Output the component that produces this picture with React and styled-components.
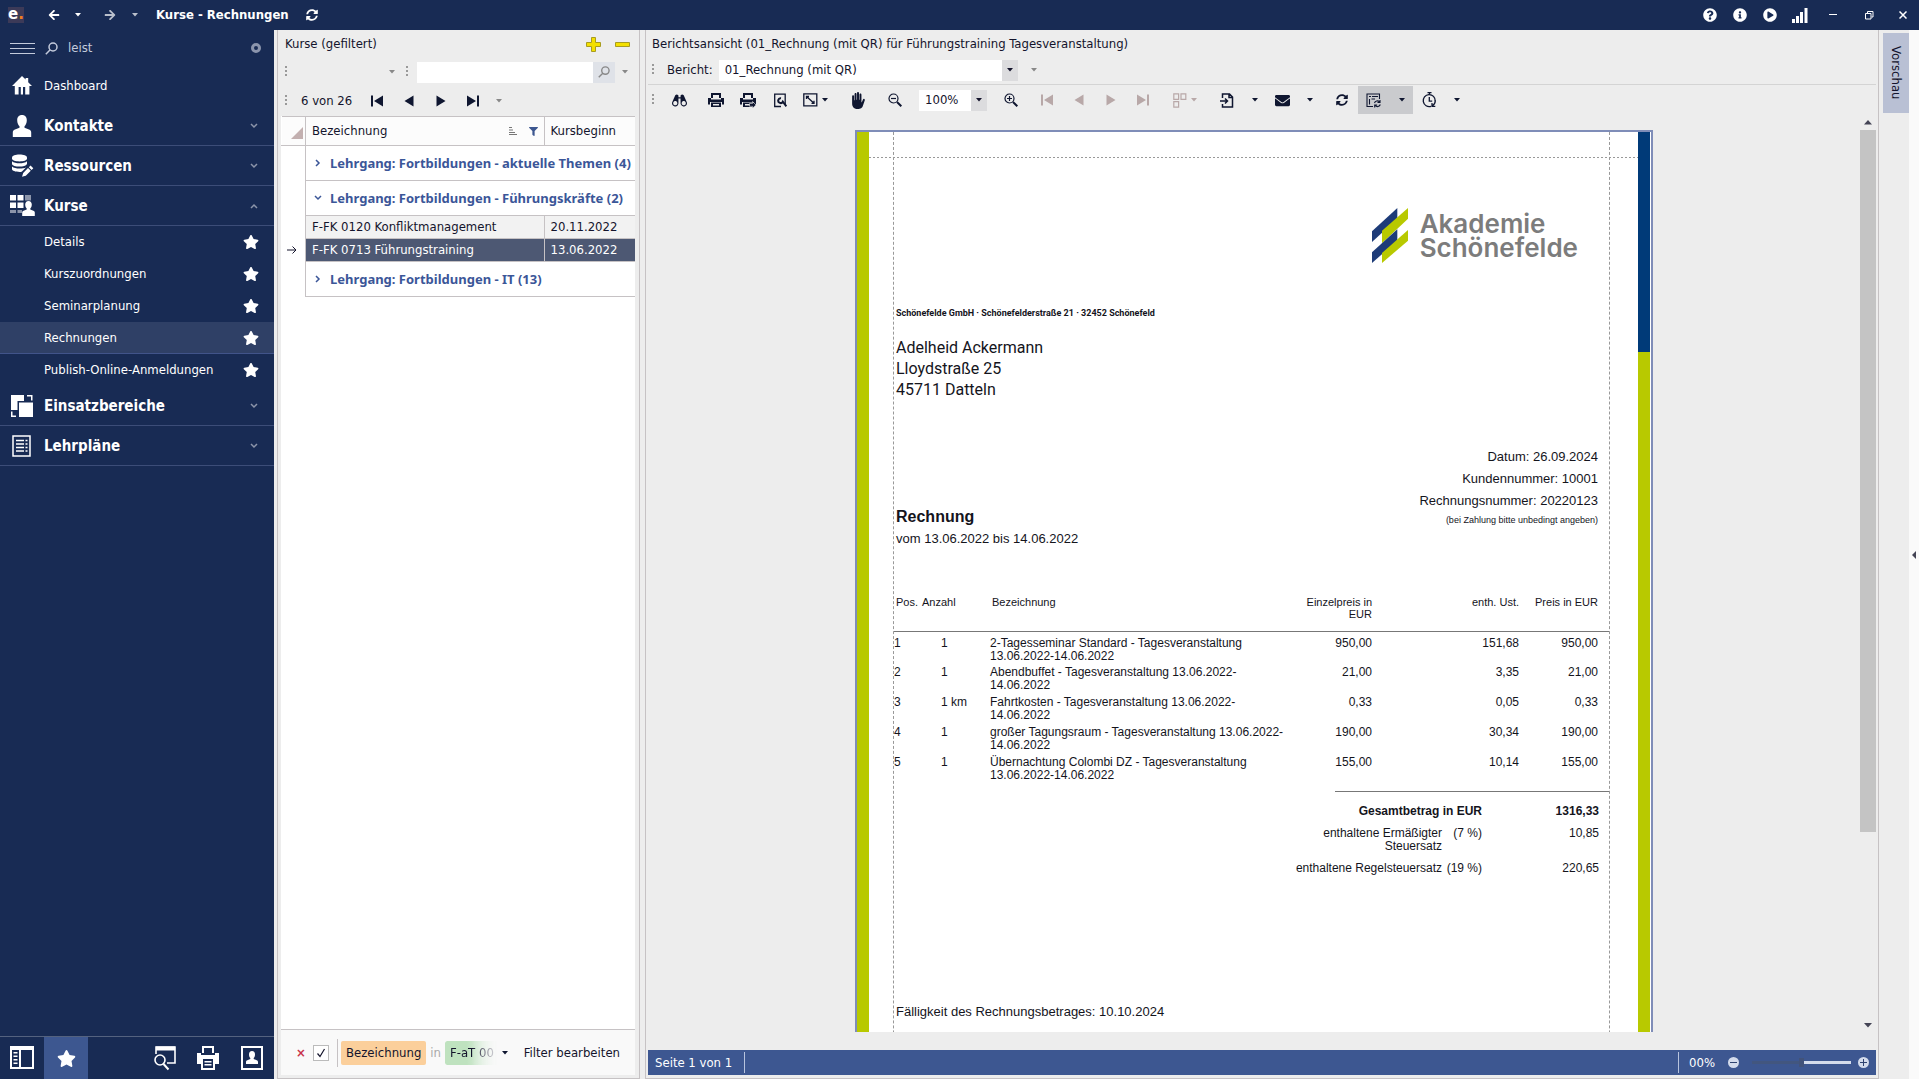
import { useState } from 'react';
import styled, { createGlobalStyle, css } from 'styled-components';
import {
  FaArrowLeft,
  FaArrowRight,
  FaSyncAlt,
  FaQuestionCircle,
  FaInfoCircle,
  FaPlayCircle,
  FaStar,
  FaEnvelope,
  FaFilter,
} from 'react-icons/fa';
import { PiBinocularsFill } from 'react-icons/pi';
import { IoHandLeftSharp } from 'react-icons/io5';

const navy = '#182b54';
const line = '#c6c2c4';
const panel = '#ededed';
const ink = '#14142c';

const GlobalStyle = createGlobalStyle`
  * { box-sizing: border-box; }
  body {
    margin: 0;
    background: ${panel};
    color: ${ink};
    font-family: "DejaVu Sans Condensed", "Noto Sans", sans-serif;
    font-size: 13px;
    line-height: 16px;
  }
  button, input, select { font: inherit; color: inherit; }
  button {
    border: 0;
    padding: 0;
    background: transparent;
  }
  svg { display: block; flex: none; }
`;

/* ---------- icons ---------- */

const Svg = ({ w = 20, h = w, box = `0 0 ${w} ${h}`, children }) => (
  <svg width={w} height={h} viewBox={box} fill="currentColor" aria-hidden="true">{children}</svg>
);

const Stroke = ({ w = 20, h = w, box = `0 0 ${w} ${h}`, sw = 1.5, children }) => (
  <svg width={w} height={h} viewBox={box} fill="none" stroke="currentColor" strokeWidth={sw} aria-hidden="true">
    {children}
  </svg>
);

const Caret = () => <Svg w={6} h={4}><path d="M0 0h6L3 3.6z" /></Svg>;
const ChevDown = () => <Stroke w={8} h={6}><path d="M1 1l3 3 3-3" /></Stroke>;
const ChevUp = () => <Stroke w={8} h={6}><path d="M1 5l3-3 3 3" /></Stroke>;
const ChevRight = () => <Stroke w={6} h={8}><path d="M1 1l3 3-3 3" /></Stroke>;

const HomeIcon = () => <Svg w={20} h={19}><path d="M10 0l3.6 3.6V2h2.6v4.2L20 10h-2.6v8.5h-4.2V11H11v7.500H8.800V11H6.600v7.500H2.800V10H0z" /></Svg>;
const PersonIcon = () => (
  <Svg w={20} h={22}>
    <path d="M10 0c3.200 0 4.800 2.200 4.800 5.200 0 2.600-1 5-2.300 6v1.600l4.500 1.600c1.600.6 2.200 1.600 2.200 3.200V22H.800v-4.400c0-1.600.6-2.600 2.200-3.200l4.500-1.600v-1.600c-1.300-1-2.300-3.400-2.300-6C5.200 2.200 6.800 0 10 0z" />
  </Svg>
);
const DatabaseIcon = () => (
  <Svg w={23} h={23}>
    <path d="M1 3.500C1 1.500 4.500.5 8.500.5S16 1.500 16 3.500v1.300c0 1.600-3.500 2.600-7.500 2.600S1 6.400 1 4.800z" />
    <path d="M1 7.200c1.500 1.400 4.500 2 7.500 2s6-.6 7.500-2V10c-1 1.800-4 2.600-7.500 2.600S1 11.600 1 10z" />
    <path d="M1 12.600c1.500 1.400 4.500 2 7.500 2 2.600 0 5-.4 6.700-1.400L11 17.500l-1 .4c-5 .2-9-.8-9-2.800z" />
    <path d="M19.500 11.500l2.800 2.800-1.700 1.700-2.800-2.800zM17 14l2.800 2.800-5 5L11 22.800l1.200-3.800z" />
  </Svg>
);
const CoursesIcon = () => (
  <Svg w={25} h={21}>
    <path d="M0 0h6v5.500H0zM7.500 0h6v5.500h-6zM0 7.500h6V13H0zM7.500 7.500h6V13h-6z" />
    <path d="M15 0h6v5.500h-6zM0 15h6v3H0zM7.500 15h4.500v3H7.500z" opacity=".5" />
    <path d="M18.500 6c2.100 0 3.300 1.500 3.300 3.600 0 1.800-.7 3.300-1.500 4v1l3 1.100c1 .4 1.500 1 1.500 2V21H12.200v-3.300c0-1 .4-1.600 1.500-2l3-1.100v-1c-.8-.7-1.500-2.200-1.500-4C15.200 7.500 16.400 6 18.500 6z" />
  </Svg>
);
const AreasIcon = () => (
  <Svg w={22} h={22}>
    <path d="M0 0h13v6H6.500v9H0z" />
    <path d="M8 7.500h14V22H8z" />
    <path d="M16 0h5.500v5.500H20v-4h-4zM0 16.500h1.500v4H5V22H0z" />
  </Svg>
);
const PlansIcon = () => (
  <Stroke w={20} h={22}>
    <path d="M1 1h17v20H1z" sw={2} />
    <path d="M4 5.500h8M4 9h8M4 12.500h8M4 16h8M13.500 5.500h2M13.500 9h2M13.500 12.500h2M13.500 16h2" />
  </Stroke>
);
const SearchIcon = ({ w = 13 }) => (
  <Stroke w={w} box="0 0 13 13"><circle cx="8" cy="5" r="4" /><path d="M5.200 7.800L.8 12.200" /></Stroke>
);
const ZoomIcon = ({ plus }) => (
  <Stroke w={14} sw={1.2}>
    <circle cx="5.500" cy="5.500" r="4.500" />
    <path d="M9 9l4.300 4.300" strokeWidth="2" />
    <path d={plus ? 'M3 5.500h5M5.500 3v5' : 'M3 5.500h5'} />
  </Stroke>
);
const PrinterIcon = ({ mini }) => (
  <Svg w={16} h={15}>
    <path fillRule="evenodd" d="M3 0h10v5h-2V2H5v3H3zM0 5h3v1.500h10V5h3v6.500h-2V9H2v2.500H0zM3 9.500h10V14H3zM5 11v1.500h6V11z" />
    {mini && <path d="M9.500 10.500h3V8.500l3.500 3.400-3.500 3.400v-2h-3z" stroke={panel} strokeWidth=".6" />}
  </Svg>
);
const PageSetupIcon = () => (
  <Stroke w={14} h={15} sw={1.3}>
    <path d="M8 13.500H1.700V1.200h10.500v10" />
    <path d="M8 5.300a2.400 2.400 0 1 0 1.800 3.400l3.600 4.600" strokeWidth="2" />
  </Stroke>
);
const FitIcon = () => (
  <Stroke w={15} h={14} sw={1.3}>
    <path d="M.8.800h13v12H.8z" /><path d="M3.500 6V3.500H6M3.500 3.500l7.500 6.800M11 7.800v2.500H8.500" />
  </Stroke>
);
const PagesIcon = () => (
  <Stroke w={14} h={15} sw={1.200}><path d="M.8.800h4.800v5.500H.8zM8 .8h4.800v5.500H8zM.8 8.600h4.800v5.500H.8z" /></Stroke>
);
const ExportIcon = () => (
  <Stroke w={14} h={15}><path d="M2.500 5V1h7l3 3v10h-10v-3M9 1v3.500h3.500" /><path d="M0 8h7.500M5 5.500L7.500 8 5 10.500" /></Stroke>
);
const LayoutIcon = () => (
  <Stroke w={16} h={15} sw={1.1}>
    <path d="M7 13.500H1V1h12.500v5" /><path d="M3 3.500h2M6 3.500h6M3.500 6v5.500M5.500 6H9" />
    <path d="M8.500 10a3 3 0 0 1 5-1.200M14 7v2.500h-2.500M14.300 11.500a3 3 0 0 1-5 1.200M8.700 14.500V12h2.500" />
  </Stroke>
);
const ClockIcon = () => (
  <Stroke w={15} h={16} sw={1.3}>
    <path d="M9 14.300a6 6 0 1 1 4.200-5.300" /><path d="M7.500 0v2.500M7.300 5v4.200h2.900M5.500.7h4" />
    <path d="M13.300 8.500c0 2.600-1 4-2.600 5M10 11v3.300h3.300" />
  </Stroke>
);
const FirstIcon = () => <Svg w={12} h={12}><path d="M0 .5h2v11H0zM12 .5v11L3 6z" /></Svg>;
const PrevIcon = () => <Svg w={10} h={12}><path d="M9.500.5v11L.5 6z" /></Svg>;
const NextIcon = () => <Svg w={10} h={12}><path d="M.5.500v11L9.500 6z" /></Svg>;
const LastIcon = () => <Svg w={12} h={12}><path d="M10 .5h2v11h-2zM0 .5v11L9 6z" /></Svg>;
const SignalIcon = () => <Svg w={16} h={15}><path d="M0 11h3v4H0zM4 8h3v7H4zM8 4h3v11H8zM12.500 0h3v15h-3z" /></Svg>;
const LogoMark = () => (
  <svg width="36" height="55" viewBox="0 0 108 165" aria-hidden="true">
    <path fill="#1d3b78" d="M76 0v32L0 102V70z" />
    <path fill="#b8c900" d="M108 0v32L30 106V68z" />
    <path fill="#1d3b78" d="M76 64v34L0 165v-32z" />
    <path fill="#b8c900" d="M108 66v32l-78 67v-30z" />
  </svg>
);

/* ---------- shell ---------- */

const Shell = styled.div`
  display: flex;
  flex-direction: column;
  height: 100vh;
  overflow: hidden;
`;

const TitleBar = styled.header`
  display: flex;
  align-items: center;
  flex: none;
  height: 30px;
  padding-left: 8px;
  background: ${navy};
  color: #fff;
`;

const AppBadge = styled.span`
  width: 16px;
  height: 16px;
  margin-right: 14px;
  background: #3c3a58;
  font: 700 15px/14px "DejaVu Sans", sans-serif;
  text-align: center;
  i { color: #f08020; font-style: normal; }
`;

const TitleButton = styled.button`
  display: grid;
  place-items: center;
  width: ${({ $w }) => $w || 30}px;
  height: 30px;
  opacity: ${({ $dim }) => ($dim ? 0.7 : 1)};
`;

const WindowTitle = styled.h1`
  margin: 0 8px;
  font-size: 13px;
  line-height: 16px;
`;

const Spacer = styled.div`
  flex: 1;
`;

const Main = styled.div`
  display: flex;
  flex: 1;
  min-height: 0;
`;

/* ---------- sidebar ---------- */

const Sidebar = styled.nav`
  display: flex;
  flex-direction: column;
  flex: none;
  width: 274px;
  background: ${navy};
  color: #fff;
`;

const SideSearch = styled.label`
  display: flex;
  align-items: center;
  height: 36px;
  padding: 0 13px 0 10px;
  gap: 10px;
  color: #c4cbdc;
  input {
    flex: 1;
    min-width: 0;
    padding: 0;
    border: 0;
    outline: 0;
    background: transparent;
  }
`;

const Clear = styled.button`
  width: 10px;
  height: 10px;
  border: 3px solid #8b95ad;
  border-radius: 50%;
`;

const navRow = css`
  display: flex;
  align-items: center;
  width: 100%;
  text-align: left;
  text-decoration: none;
  color: #fff;
`;

const NavGroup = styled.button`
  ${navRow}
  height: 40px;
  padding: 0 16px 0 9px;
  border-bottom: 1px solid ${({ $plain }) => ($plain ? 'transparent' : '#3c4d78')};
  font-size: ${({ $plain }) => ($plain ? 13 : 15)}px;
  font-weight: ${({ $plain }) => ($plain ? 400 : 700)};
  > span:first-child {
    display: grid;
    place-items: center;
    width: 26px;
    margin-right: 9px;
  }
  > svg { margin-left: auto; opacity: 0.5; }
`;

const NavLink = styled.a`
  ${navRow}
  justify-content: space-between;
  height: 32px;
  padding: 0 15px 0 44px;
  border-bottom: 1px solid ${({ $active }) => ($active ? '#41548a' : 'transparent')};
  background: ${({ $active }) => ($active ? '#2f4066' : 'transparent')};
`;

const SideFooter = styled.div`
  display: flex;
  margin-top: auto;
  height: 43px;
  border-top: 1px solid #54627f;
`;

const FooterButton = styled.button`
  display: grid;
  place-items: center;
  width: 44px;
  background: ${({ $active }) => ($active ? '#3d5790' : 'transparent')};
`;

/* ---------- course list ---------- */

const ListPanel = styled.section`
  display: flex;
  flex-direction: column;
  flex: none;
  width: 363px;
  margin: 0 5px 0 3px;
  padding: 0 4px 3px 3px;
  border: 1px solid ${line};
  border-width: 0 1px 1px;
`;

const PanelTitle = styled.div`
  display: flex;
  align-items: center;
  height: 28px;
  padding-left: 4px;
  h2 {
    margin: 0 auto 0 0;
    font-size: 13px;
    font-weight: 400;
  }
`;

const YellowButton = styled.button`
  display: grid;
  place-items: center;
  width: 32px;
  height: 20px;
  color: #f4e000;
  &:last-child { width: 26px; }
`;

const Bar = styled.div`
  display: flex;
  align-items: center;
  height: ${({ $h }) => $h || 28}px;
`;

const Grip = styled.span`
  width: 2px;
  height: 12px;
  margin: 0 ${({ $end }) => $end || 8}px 0 4px;
  background: repeating-linear-gradient(#999 0 2px, transparent 2px 4px);
`;

const ToolButton = styled.button`
  display: grid;
  grid-auto-flow: column;
  place-content: center;
  align-items: center;
  gap: 4px;
  width: ${({ $w }) => $w || 32}px;
  height: 28px;
  background: ${({ $on }) => ($on ? '#cacbce' : 'transparent')};
  color: ${({ disabled, $soft }) => (disabled ? '#b8a8a8' : $soft ? '#888' : '#0f1630')};
`;

const Gap = styled.span`
  flex: none;
  width: ${({ $w }) => $w || 8}px;
`;

const SearchField = styled.label`
  display: flex;
  width: 198px;
  height: 21px;
  background: #fff;
  input {
    flex: 1;
    min-width: 0;
    border: 0;
    outline: 0;
    background: transparent;
  }
  span {
    display: grid;
    place-items: center;
    width: 22px;
    background: #dfe2e8;
    color: #888;
  }
`;

const GridArea = styled.div`
  flex: 1;
  min-height: 0;
  background: #fff;
`;

const Grid = styled.table`
  width: 100%;
  border-collapse: collapse;
  table-layout: fixed;
  th, td {
    padding: 0 6px;
    border: 1px solid ${line};
    font-weight: 400;
    text-align: left;
    white-space: nowrap;
  }
  th { height: 29px; background: #fcfcfc; }
  td:first-child { border-color: transparent ${line} transparent transparent; padding: 0 4px; }
  th:first-child { border-left: 0; vertical-align: bottom; padding: 0 2px 6px; }
  th:last-child, td:last-child { border-right: 0; }
  th:first-child svg { margin-left: auto; color: #c3b0b0; }
`;

const HeadCell = styled.div`
  display: flex;
  align-items: center;
  gap: 12px;
  svg:first-of-type { margin-left: auto; color: #777; }
  svg:last-of-type { color: #3d5790; }
`;

const GroupButton = styled.button`
  display: flex;
  align-items: center;
  gap: 8px;
  height: 34px;
  padding-left: 2px;
  color: #3b5698;
  font-family: "Noto Sans", sans-serif;
  font-size: 13px;
  font-weight: 700;
  > span { display: grid; place-items: center; width: 8px; }
`;

const CourseRow = styled.tr`
  height: 23px;
  td:not(:first-child) {
    background: ${({ $active }) => ($active ? '#4d5873' : '#f2f2f2')};
    color: ${({ $active }) => ($active ? '#fff' : ink)};
  }
`;

const FilterBar = styled.div`
  display: flex;
  align-items: center;
  height: 46px;
  padding: 0 15px;
  border-top: 1px solid ${line};
  background: #f9f9f9;
  white-space: nowrap;
`;

const Remove = styled.button`
  width: 8px;
  margin-right: 9px;
  color: #c8324a;
  font-weight: 700;
`;

const Check = styled.label`
  display: grid;
  margin-right: 8px;
  > * { grid-area: 1 / 1; place-self: center; }
  input {
    appearance: none;
    width: 16px;
    height: 16px;
    margin: 0;
    border: 1px solid #bbb;
    background: #fff;
  }
  svg { visibility: hidden; pointer-events: none; }
  input:checked + svg { visibility: visible; }
`;

const FilterBox = styled.div`
  display: flex;
  align-items: center;
  height: 28px;
  padding-left: 3px;
  border-left: 1px solid ${line};
`;

const Chip = styled.span`
  padding: 4px 5px;
  border-radius: 2px;
  background: #fbcf9b;
`;

const FadeChip = styled(Chip)`
  background: linear-gradient(90deg, #bfe2bf 40%, #f9f9f9);
  -webkit-mask-image: linear-gradient(90deg, #000 50%, transparent);
`;

const Muted = styled.span`
  margin: 0 4px;
  color: #aaa;
`;

/* ---------- report ---------- */

const Report = styled.section`
  display: flex;
  flex-direction: column;
  flex: 1;
  min-width: 0;
  padding: 0 2px 3px;
  border: 1px solid ${line};
  border-width: 0 1px 1px;
`;

const ReportTitle = styled.h2`
  margin: 0;
  padding: 5px 4px 0;
  height: 26px;
  font-size: 13px;
  line-height: 18px;
  font-weight: 400;
`;

const Picker = styled.span`
  display: flex;
  align-items: center;
  width: ${({ $w }) => $w}px;
  height: 21px;
  background: linear-gradient(90deg, transparent calc(100% - 16px), #dcdcde 0), #fff;
  select {
    appearance: none;
    flex: 1;
    min-width: 0;
    height: 21px;
    padding: 0 6px;
    border: 0;
    background: transparent;
  }
  svg { margin-right: 5px; pointer-events: none; }
`;

const Viewer = styled.div`
  display: flex;
  flex: 1;
  min-height: 0;
`;

const Canvas = styled.div`
  display: flex;
  justify-content: center;
  flex: 1;
  min-width: 0;
  overflow: hidden;
  padding-top: 15px;
  margin-bottom: 18px;
`;

const ScrollBar = styled.div`
  display: flex;
  flex-direction: column;
  justify-content: space-between;
  align-items: center;
  width: 16px;
  padding-bottom: 22px;
  color: #445;
`;

const Thumb = styled.div`
  flex: 1;
  width: 16px;
  margin: 5px 0 191px;
  background: #c4c4c4;
`;

const StatusBar = styled.footer`
  display: flex;
  align-items: center;
  justify-content: space-between;
  height: 25px;
  padding: 0 7px;
  background: #3d5791;
  color: #fff;
  > span {
    padding-right: 12px;
    border-right: 1px solid #b8c4de;
    line-height: 21px;
  }
`;

const ZoomControl = styled.div`
  display: flex;
  align-items: center;
  padding-left: 10px;
  border-left: 1px solid #b8c4de;
  line-height: 21px;
  span { margin-right: 13px; }
  input {
    appearance: none;
    width: 99px;
    height: 3px;
    margin: 0 7px 0 13px;
    background: linear-gradient(90deg, #42567f 52%, #d4dcec 0);
  }
  input::-webkit-slider-thumb {
    appearance: none;
    width: 5px;
    height: 9px;
    background: #42537a;
  }
`;

const RoundButton = styled.button`
  display: grid;
  place-items: center;
  width: 11px;
  height: 11px;
  border-radius: 50%;
  background: #d4dcec;
  color: #2f4370;
`;

const TabStrip = styled.aside`
  display: flex;
  flex: none;
  width: 40px;
  padding-left: 4px;
`;

const SideTab = styled.button`
  width: 26px;
  height: 80px;
  margin-top: 3px;
  background: #b9c0d4;
  writing-mode: vertical-rl;
`;

const Rail = styled.div`
  display: grid;
  place-items: center;
  flex: 1;
  background: #fafafa;
  color: #445;
`;

/* ---------- invoice page ---------- */

const Page = styled.article`
  display: flex;
  flex: none;
  width: 798px;
  height: 1130px;
  border: 2px solid #7f8db8;
  background: #fff;
  color: #14141c;
  font-family: "Liberation Sans", Arial, sans-serif;
`;

const Stripe = styled.div`
  width: 12px;
  margin-right: ${({ $right }) => ($right ? 1 : 0)}px;
  background: ${({ $right }) => ($right ? 'linear-gradient(#003a78 220px, #b8c900 0)' : '#b8c900')};
`;

const Sheet = styled.div`
  flex: 1;
  padding: 0 28px 0 24px;
  background: repeating-linear-gradient(90deg, #999 0 2px, transparent 2px 4px) 0 25px / 100% 1px no-repeat;
`;

const Body = styled.div`
  height: 100%;
  padding: 76px 0 0 2px;
  border: 1px dashed #999;
  border-width: 0 1px;
`;

const Brand = styled.div`
  display: flex;
  align-items: center;
  justify-content: flex-end;
  gap: 12px;
  padding-right: 31px;
  color: #7c7c7c;
  font: 600 26px/24px Inter, sans-serif;
`;

const Sender = styled.p`
  margin: 44px 0 0;
  font: 700 9px/12px Roboto, sans-serif;
`;

const Address = styled.address`
  margin-top: 18px;
  font: 400 16px/21px Roboto, sans-serif;
`;

const Meta = styled.div`
  display: flex;
  justify-content: space-between;
  align-items: flex-end;
  margin-top: 46px;
  padding-right: 11px;
  font-size: 13px;
  line-height: 22px;
  h3 { margin: 0; font-size: 16px; line-height: 22px; }
  p { margin: 0; }
`;

const Refs = styled.div`
  padding-bottom: 22px;
  text-align: right;
  small { display: block; font-size: 9px; line-height: 16px; }
`;

const Items = styled.table`
  width: 715px;
  margin: 46px 0 0 -2px;
  border-collapse: collapse;
  table-layout: fixed;
  font-size: 12px;
  line-height: 13px;
  th, td {
    padding: 0;
    font-weight: 400;
    text-align: left;
    vertical-align: top;
  }
  th {
    height: 35px;
    padding-left: 2px;
    border-bottom: 1px solid #777;
    font-size: 11px;
    line-height: 12px;
  }
  td { height: 30px; }
  tbody tr:first-child td { padding-top: 5px; height: 35px; }
  th:nth-child(n + 4), td:nth-child(n + 4) { text-align: right; }
  th:last-child, td:last-child { padding-right: 11px; }
`;

const Count = styled.td`
  && { padding-left: 21px; }
`;

const TotalRows = styled.div`
  display: grid;
  grid-template-columns: 1fr 40px 117px;
  margin: 0 10px 0 auto;
  width: 330px;
  row-gap: 9px;
  font-size: 12px;
  line-height: 13px;
  text-align: right;
  strong:first-child { grid-column: span 2; }
`;

const TotalRule = styled.hr`
  width: 274px;
  height: 1px;
  margin: 5px 0 13px auto;
  border: 0;
  background: #777;
`;

const Due = styled.p`
  margin: 129px 0 0;
  font-size: 13px;
  line-height: 16px;
`;

const positions = [
  ['1', '1', '2-Tagesseminar Standard - Tagesveranstaltung', '13.06.2022-14.06.2022', '950,00', '151,68', '950,00'],
  ['2', '1', 'Abendbuffet - Tagesveranstaltung 13.06.2022-', '14.06.2022', '21,00', '3,35', '21,00'],
  ['3', '1 km', 'Fahrtkosten - Tagesveranstaltung 13.06.2022-', '14.06.2022', '0,33', '0,05', '0,33'],
  ['4', '1', 'großer Tagungsraum - Tagesveranstaltung 13.06.2022-', '14.06.2022', '190,00', '30,34', '190,00'],
  ['5', '1', 'Übernachtung Colombi DZ - Tagesveranstaltung', '13.06.2022-14.06.2022', '155,00', '10,14', '155,00'],
];

const links = ['Details', 'Kurszuordnungen', 'Seminarplanung', 'Rechnungen', 'Publish-Online-Anmeldungen'];

function Group({ icon, label, open }) {
  return (
    <NavGroup type="button" aria-expanded={!!open}>
      <span>{icon}</span>
      {label}
      {open ? <ChevUp /> : <ChevDown />}
    </NavGroup>
  );
}

function Side() {
  const [term, setTerm] = useState('leist');
  return (
    <Sidebar>
      <SideSearch>
        <Stroke w={25} h={12} sw={1}><path d="M0 1.500h25M0 6.500h25M0 11.500h25" /></Stroke>
        <SearchIcon />
        <input aria-label="Suche" value={term} onChange={(e) => setTerm(e.target.value)} />
        <Clear type="button" aria-label="Leeren" onClick={() => setTerm('')} />
      </SideSearch>
      <NavGroup type="button" $plain><span><HomeIcon /></span>Dashboard</NavGroup>
      <Group icon={<PersonIcon />} label="Kontakte" />
      <Group icon={<DatabaseIcon />} label="Ressourcen" />
      <Group icon={<CoursesIcon />} label="Kurse" open />
      {links.map((l) => (
        <NavLink key={l} href="#" $active={l === 'Rechnungen'}>{l}<FaStar size={16} /></NavLink>
      ))}
      <Group icon={<AreasIcon />} label="Einsatzbereiche" />
      <Group icon={<PlansIcon />} label="Lehrpläne" />
      <SideFooter>
        <FooterButton type="button" aria-label="Navigation">
          <Svg w={24} h={26} box="0 0 24 26"><path fillRule="evenodd" d="M0 1h24v23H0zM2 5v17h7V5zM11 5v17h11V5z" /><path d="M3.500 7h4v1.500h-4zM3.500 10.500h4V12h-4zM3.500 14h4v1.500h-4zM3.500 17.500h4V19h-4z" /></Svg>
        </FooterButton>
        <FooterButton type="button" aria-label="Favoriten" $active><FaStar size={19} /></FooterButton>
        <Spacer />
        <FooterButton type="button" aria-label="Suchen">
          <Stroke w={24} h={26} sw={1.600}>
            <path d="M4 9V2h19v16h-8" /><path d="M4 3.500h19" strokeWidth="4" />
            <circle cx="8" cy="15" r="5" /><path d="M11.500 19l5 5.500" strokeWidth="2" />
          </Stroke>
        </FooterButton>
        <FooterButton type="button" aria-label="Drucken">
          <Svg w={22} h={24}><path fillRule="evenodd" d="M5 0h12v7h-2V2H7v5H5zM0 7h4v2h14V7h4v11h-4v6H4v-6H0zM6 13v9h10v-9zM7.500 15h7v1.500h-7zM7.500 18h7v1.500h-7z" /></Svg>
        </FooterButton>
        <FooterButton type="button" aria-label="Benutzer">
          <Svg w={22} h={26}><path fillRule="evenodd" d="M0 1h22v24H0zM2 3v20h18V3z" /><path d="M11 6c2 0 3 1.500 3 3.400 0 1.600-.6 3-1.300 3.600v1l3 1.200c.9.400 1.300 1 1.300 1.800v2H5v-2c0-.8.400-1.400 1.300-1.800l3-1.200v-1C8.600 12.400 8 11 8 9.400 8 7.500 9 6 11 6z" /></Svg>
        </FooterButton>
      </SideFooter>
    </Sidebar>
  );
}

function CourseGroup({ label, open }) {
  return (
    <tr>
      <td />
      <td colSpan={2}>
        <GroupButton type="button"><span>{open ? <ChevDown /> : <ChevRight />}</span>{label}</GroupButton>
      </td>
    </tr>
  );
}

function Courses() {
  return (
    <ListPanel>
      <PanelTitle>
        <h2>Kurse (gefiltert)</h2>
        <YellowButton type="button" aria-label="Hinzufügen">
          <Svg w={15}><path stroke="#a89c20" d="M5.500.5h4v5h5v4h-5v5h-4v-5h-5v-4h5z" /></Svg>
        </YellowButton>
        <YellowButton type="button" aria-label="Entfernen">
          <Svg w={15} h={5}><path stroke="#a89c20" d="M.5.500h14v4H.5z" /></Svg>
        </YellowButton>
      </PanelTitle>
      <Bar>
        <Grip /><Gap $w={87} />
        <ToolButton type="button" aria-label="Optionen" $w={20} $soft><Caret /></ToolButton>
        <Grip $end={9} />
        <SearchField><input aria-label="Kurse suchen" /><span><SearchIcon w={12} /></span></SearchField>
        <ToolButton type="button" aria-label="Suchoptionen" $w={20} $soft><Caret /></ToolButton>
      </Bar>
      <Bar $h={30}>
        <Grip $end={14} />6 von 26<Gap $w={9} />
        <ToolButton type="button" aria-label="Erster"><FirstIcon /></ToolButton>
        <ToolButton type="button" aria-label="Zurück"><PrevIcon /></ToolButton>
        <ToolButton type="button" aria-label="Weiter"><NextIcon /></ToolButton>
        <ToolButton type="button" aria-label="Letzter"><LastIcon /></ToolButton>
        <ToolButton type="button" aria-label="Mehr" $w={20} $soft><Caret /></ToolButton>
      </Bar>
      <GridArea>
        <Grid>
          <colgroup><col width="24" /><col /><col width="91" /></colgroup>
          <thead>
            <tr>
              <th><Svg w={12}><path d="M12 0v12H0z" /></Svg></th>
              <th>
                <HeadCell>
                  Bezeichnung
                  <Stroke w={9} h={8} sw={1}><path d="M1 .5h3M1 3h4M1 5.500h6M1 7.500h8" /></Stroke>
                  <FaFilter size={9} />
                </HeadCell>
              </th>
              <th>Kursbeginn</th>
            </tr>
          </thead>
          <tbody>
            <CourseGroup label="Lehrgang: Fortbildungen - aktuelle Themen (4)" />
            <CourseGroup label="Lehrgang: Fortbildungen - Führungskräfte (2)" open />
            <CourseRow><td /><td>F-FK 0120 Konfliktmanagement</td><td>20.11.2022</td></CourseRow>
            <CourseRow $active>
              <td><Stroke w={11} h={8} sw={1}><path d="M1 4h9M6.500.5L10 4 6.500 7.500" /></Stroke></td>
              <td>F-FK 0713 Führungstraining</td>
              <td>13.06.2022</td>
            </CourseRow>
            <CourseGroup label="Lehrgang: Fortbildungen - IT (13)" />
          </tbody>
        </Grid>
      </GridArea>
      <FilterBar>
        <Remove type="button" aria-label="Filter entfernen">×</Remove>
        <Check>
          <input type="checkbox" defaultChecked aria-label="Filter aktiv" />
          <Stroke w={10} h={10} sw={1.2}><path d="M1.500 5.500L4 8.500 8.500 1" /></Stroke>
        </Check>
        <FilterBox>
          <Chip>Bezeichnung</Chip><Muted>in</Muted><FadeChip>F-aT 00</FadeChip>
        </FilterBox>
        <ToolButton type="button" aria-label="Filterliste" $w={16}><Caret /></ToolButton>
        <Gap $w={12} />
        <button type="button">Filter bearbeiten</button>
      </FilterBar>
    </ListPanel>
  );
}

function Invoice() {
  return (
    <Page>
      <Stripe />
      <Sheet>
        <Body>
          <Brand><LogoMark /><div>Akademie<br />Schönefelde</div></Brand>
          <Sender>Schönefelde GmbH · Schönefelderstraße 21 · 32452 Schönefeld</Sender>
          <Address>Adelheid Ackermann<br />Lloydstraße 25<br />45711 Datteln</Address>
          <Meta>
            <div>
              <h3>Rechnung</h3>
              <p>vom 13.06.2022 bis 14.06.2022</p>
            </div>
            <Refs>
              <p>Datum: 26.09.2024</p>
              <p>Kundennummer: 10001</p>
              <p>Rechnungsnummer: 20220123</p>
              <small>(bei Zahlung bitte unbedingt angeben)</small>
            </Refs>
          </Meta>
          <Items>
            <colgroup>
              <col width="26" /><col width="70" /><col width="310" /><col width="72" /><col width="147" /><col />
            </colgroup>
            <thead>
              <tr>
                <th>Pos.</th><th>Anzahl</th><th>Bezeichnung</th><th>Einzelpreis in EUR</th><th>enth. Ust.</th><th>Preis in EUR</th>
              </tr>
            </thead>
            <tbody>
              {positions.map(([pos, count, name, date, single, tax, price]) => (
                <tr key={pos}>
                  <td>{pos}</td><Count>{count}</Count><td>{name}<br />{date}</td>
                  <td>{single}</td><td>{tax}</td><td>{price}</td>
                </tr>
              ))}
            </tbody>
          </Items>
          <TotalRule />
          <TotalRows>
            <strong>Gesamtbetrag in EUR</strong><strong>1316,33</strong>
            <span>enthaltene Ermäßigter<br />Steuersatz</span><span>(7 %)</span><span>10,85</span>
            <span>enthaltene Regelsteuersatz</span><span>(19 %)</span><span>220,65</span>
          </TotalRows>
          <Due>Fälligkeit des Rechnungsbetrages: 10.10.2024</Due>
        </Body>
      </Sheet>
      <Stripe $right />
    </Page>
  );
}

const ReportBar = styled(Bar)`
  border-top: ${({ $rule }) => ($rule ? '1px solid #d4d4d4' : 0)};
`;

function ReportView() {
  return (
    <Report>
      <ReportTitle>Berichtsansicht (01_Rechnung (mit QR) für Führungstraining Tagesveranstaltung)</ReportTitle>
      <ReportBar $h={28}>
        <Grip $end={13} />
        <label htmlFor="bericht">Bericht:</label><Gap $w={6} />
        <Picker $w={299}>
          <select id="bericht"><option>01_Rechnung (mit QR)</option></select>
          <Caret />
        </Picker>
        <ToolButton type="button" aria-label="Mehr" $soft><Caret /></ToolButton>
      </ReportBar>
      <ReportBar $h={31} $rule>
        <Grip $end={9} />
        <ToolButton type="button" aria-label="Suchen"><PiBinocularsFill size={17} /></ToolButton><Gap $w={5} />
        <ToolButton type="button" aria-label="Drucken"><PrinterIcon /></ToolButton>
        <ToolButton type="button" aria-label="Schnelldruck"><PrinterIcon mini /></ToolButton>
        <ToolButton type="button" aria-label="Seite einrichten"><PageSetupIcon /></ToolButton>
        <ToolButton type="button" aria-label="Skalieren" $w={38}><FitIcon /><Caret /></ToolButton><Gap />
        <ToolButton type="button" aria-label="Hand"><IoHandLeftSharp size={17} /></ToolButton><Gap $w={5} />
        <ToolButton type="button" aria-label="Verkleinern"><ZoomIcon /></ToolButton><Gap />
        <Picker $w={68}>
          <select aria-label="Zoom"><option>100%</option></select>
          <Caret />
        </Picker>
        <Gap />
        <ToolButton type="button" aria-label="Vergrößern"><ZoomIcon plus /></ToolButton><Gap $w={4} />
        <ToolButton type="button" aria-label="Erste Seite" disabled><FirstIcon /></ToolButton>
        <ToolButton type="button" aria-label="Vorige Seite" disabled><PrevIcon /></ToolButton>
        <ToolButton type="button" aria-label="Nächste Seite" disabled><NextIcon /></ToolButton>
        <ToolButton type="button" aria-label="Letzte Seite" disabled><LastIcon /></ToolButton><Gap />
        <ToolButton type="button" aria-label="Mehrere Seiten" $w={36} disabled><PagesIcon /><Caret /></ToolButton><Gap />
        <ToolButton type="button" aria-label="Export"><ExportIcon /></ToolButton>
        <ToolButton type="button" aria-label="Exportformat" $w={23}><Caret /></ToolButton>
        <ToolButton type="button" aria-label="Senden"><FaEnvelope size={15} /></ToolButton>
        <ToolButton type="button" aria-label="Sendeformat" $w={23}><Caret /></ToolButton><Gap $w={5} />
        <ToolButton type="button" aria-label="Aktualisieren"><FaSyncAlt size={12} /></ToolButton>
        <ToolButton type="button" aria-label="Automatisch" $on><LayoutIcon /></ToolButton>
        <ToolButton type="button" aria-label="Automatik wählen" $w={23} $on><Caret /></ToolButton>
        <ToolButton type="button" aria-label="Zeitplan"><ClockIcon /></ToolButton>
        <ToolButton type="button" aria-label="Zeitplan wählen" $w={23}><Caret /></ToolButton>
      </ReportBar>
      <Viewer>
        <Canvas><Invoice /></Canvas>
        <ScrollBar>
          <Svg w={8} h={10} box="0 -5 8 10"><path d="M0 4.500h8L4 0z" /></Svg>
          <Thumb />
          <Svg w={8} h={5}><path d="M0 0h8L4 4.500z" /></Svg>
        </ScrollBar>
      </Viewer>
      <StatusBar>
        <span>Seite 1 von 1</span>
        <ZoomControl>
          <span>00%</span>
          <RoundButton type="button" aria-label="Kleiner"><Stroke w={7} sw={1}><path d="M0 3.500h7" /></Stroke></RoundButton>
          <input type="range" aria-label="Zoomfaktor" defaultValue="50" />
          <RoundButton type="button" aria-label="Größer"><Stroke w={7} sw={1}><path d="M0 3.500h7M3.500 0v7" /></Stroke></RoundButton>
        </ZoomControl>
      </StatusBar>
    </Report>
  );
}

function App() {
  return (
    <Shell>
      <GlobalStyle />
      <TitleBar>
        <AppBadge>e<i>.</i></AppBadge>
        <TitleButton type="button" aria-label="Zurück" $w={32}><FaArrowLeft size={12} /></TitleButton>
        <TitleButton type="button" aria-label="Verlauf zurück" $w={16}><Caret /></TitleButton>
        <Gap />
        <TitleButton type="button" aria-label="Vor" $w={32} $dim><FaArrowRight size={12} /></TitleButton>
        <TitleButton type="button" aria-label="Verlauf vor" $w={18} $dim><Caret /></TitleButton>
        <Gap $w={4} />
        <WindowTitle>Kurse - Rechnungen</WindowTitle>
        <TitleButton type="button" aria-label="Neu laden"><FaSyncAlt size={12} /></TitleButton>
        <Spacer />
        <TitleButton type="button" aria-label="Hilfe"><FaQuestionCircle size={14} /></TitleButton>
        <TitleButton type="button" aria-label="Info"><FaInfoCircle size={14} /></TitleButton>
        <TitleButton type="button" aria-label="Start"><FaPlayCircle size={14} /></TitleButton>
        <TitleButton type="button" aria-label="Verbindung"><SignalIcon /></TitleButton>
        <TitleButton type="button" aria-label="Minimieren" $w={36}><Stroke w={8} h={2} sw={1}><path d="M0 .5h8" /></Stroke></TitleButton>
        <TitleButton type="button" aria-label="Wiederherstellen" $w={36}>
          <Stroke w={9} sw={1}><path d="M.5 2.500h5.500v5.500H.5zM2.500 2V.5H8v5.500H6.500" /></Stroke>
        </TitleButton>
        <TitleButton type="button" aria-label="Schließen" $w={32}><Stroke w={8}><path d="M.5.500l7 7M7.500.5l-7 7" /></Stroke></TitleButton>
      </TitleBar>
      <Main>
        <Side />
        <Courses />
        <ReportView />
        <TabStrip>
          <SideTab type="button">Vorschau</SideTab>
          <Rail><Svg w={4} h={8}><path d="M4 0v8L0 4z" /></Svg></Rail>
        </TabStrip>
      </Main>
    </Shell>
  );
}

export default App;
